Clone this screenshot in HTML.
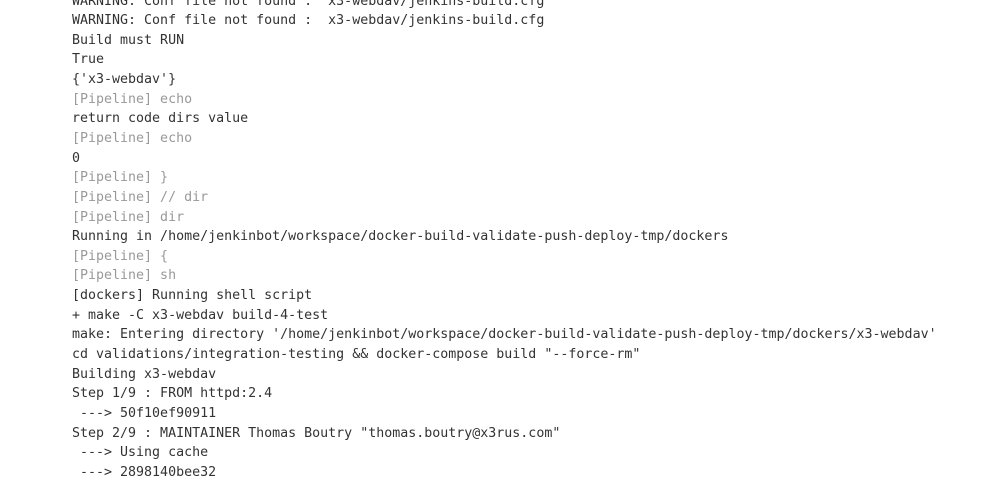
<!DOCTYPE html>
<html><head><style>
html,body{margin:0;padding:0;background:#fff;width:1007px;height:481px;overflow:hidden}
pre{margin:0;position:absolute;left:72px;top:-8.5px;font-family:"DejaVu Sans Mono",monospace;font-size:13.3px;line-height:19.64px;color:#333;white-space:pre}
.g{color:#999}
</style></head><body>
<pre>WARNING: Conf file not found :  x3-webdav/jenkins-build.cfg
WARNING: Conf file not found :  x3-webdav/jenkins-build.cfg
Build must RUN
True
{'x3-webdav'}
<span class="g">[Pipeline] echo</span>
return code dirs value
<span class="g">[Pipeline] echo</span>
0
<span class="g">[Pipeline] }</span>
<span class="g">[Pipeline] // dir</span>
<span class="g">[Pipeline] dir</span>
Running in /home/jenkinbot/workspace/docker-build-validate-push-deploy-tmp/dockers
<span class="g">[Pipeline] {</span>
<span class="g">[Pipeline] sh</span>
[dockers] Running shell script
+ make -C x3-webdav build-4-test
make: Entering directory '/home/jenkinbot/workspace/docker-build-validate-push-deploy-tmp/dockers/x3-webdav'
cd validations/integration-testing &amp;&amp; docker-compose build "--force-rm"
Building x3-webdav
Step 1/9 : FROM httpd:2.4
 ---&gt; 50f10ef90911
Step 2/9 : MAINTAINER Thomas Boutry "thomas.boutry@x3rus.com"
 ---&gt; Using cache
 ---&gt; 2898140bee32
</pre>
</body></html>
